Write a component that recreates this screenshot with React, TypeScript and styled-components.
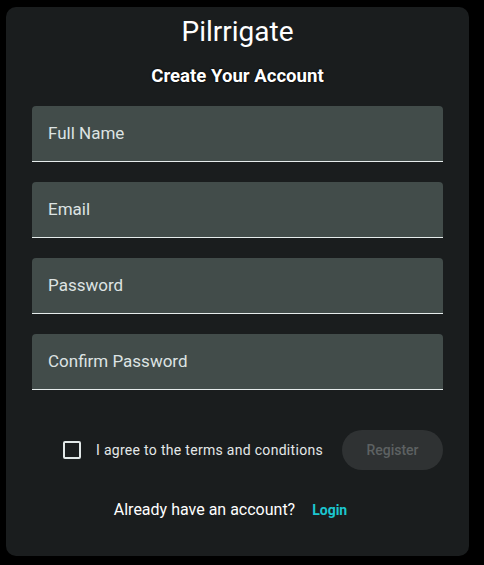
import React from "react";
import styled, { createGlobalStyle } from "styled-components";

const Global = createGlobalStyle`
  html, body { margin: 0; padding: 0; background: #000; }
  body { font-family: Roboto, "Liberation Sans", sans-serif; }
  * { box-sizing: border-box; }
`;

const Page = styled.div`
  width: 484px;
  height: 565px;
  padding: 7px 15px 9px 6px;
  background: #000;
`;

const Card = styled.div`
  width: 463px;
  height: 549px;
  background: #1a1d1e;
  border-radius: 10px;
  display: flex;
  flex-direction: column;
  align-items: center;
  padding: 13px 26px 0 26px;
`;

const Title = styled.h1`
  margin: 0;
  font-size: 28px;
  font-weight: 400;
  line-height: 24px;
  color: #fff;
  height: 24px;
`;

const Subtitle = styled.h2`
  margin: 20px 0 0;
  font-size: 18.6px;
  font-weight: 700;
  line-height: 24px;
  color: #fff;
  text-shadow: 0 0 2px #000, 0 0 1px #000;
`;

const Form = styled.div`
  width: 411px;
  margin-top: 18px;
  display: flex;
  flex-direction: column;
  gap: 20px;
`;

const Field = styled.div`
  height: 56px;
  background: #424c4a;
  border-radius: 4px 4px 0 0;
  border-bottom: 1px solid #e6ecec;
  display: flex;
  align-items: center;
  padding-left: 16px;
  padding-bottom: 2px;
  font-size: 17px;
  color: #dde3e3;
`;

const ActionRow = styled.div`
  width: 411px;
  margin-top: 40px;
  display: flex;
  align-items: center;
  justify-content: space-between;
  padding-left: 31px;
`;

const Agree = styled.label`
  display: flex;
  align-items: center;
  gap: 15px;
  font-size: 14px;
  letter-spacing: 0.3px;
  color: #e4e8e8;
`;

const Box = styled.span`
  width: 18px;
  height: 18px;
  border: 2px solid #e2e8e8;
  border-radius: 2px;
  display: inline-block;
`;

const RegisterButton = styled.button`
  width: 101px;
  height: 40px;
  border: none;
  border-radius: 20px;
  background: #2f3233;
  color: #5d6162;
  font-family: Roboto, "Liberation Sans", sans-serif;
  font-size: 14px;
  font-weight: 500;
`;

const Footer = styled.div`
  margin-top: 30px;
  display: flex;
  align-items: center;
  gap: 17px;
  padding-right: 14px;
`;

const FooterText = styled.span`
  font-size: 16px;
  color: #fff;
`;

const LoginLink = styled.a`
  font-size: 14px;
  font-weight: 700;
  color: #1cc6cf;
  text-decoration: none;
`;

export default function App() {
  return (
    <>
      <Global />
      <Page>
        <Card>
          <Title>Pilrrigate</Title>
          <Subtitle>Create Your Account</Subtitle>
          <Form>
            <Field>Full Name</Field>
            <Field>Email</Field>
            <Field>Password</Field>
            <Field>Confirm Password</Field>
          </Form>
          <ActionRow>
            <Agree>
              <Box />
              I agree to the terms and conditions
            </Agree>
            <RegisterButton disabled>Register</RegisterButton>
          </ActionRow>
          <Footer>
            <FooterText>Already have an account?</FooterText>
            <LoginLink href="#">Login</LoginLink>
          </Footer>
        </Card>
      </Page>
    </>
  );
}
